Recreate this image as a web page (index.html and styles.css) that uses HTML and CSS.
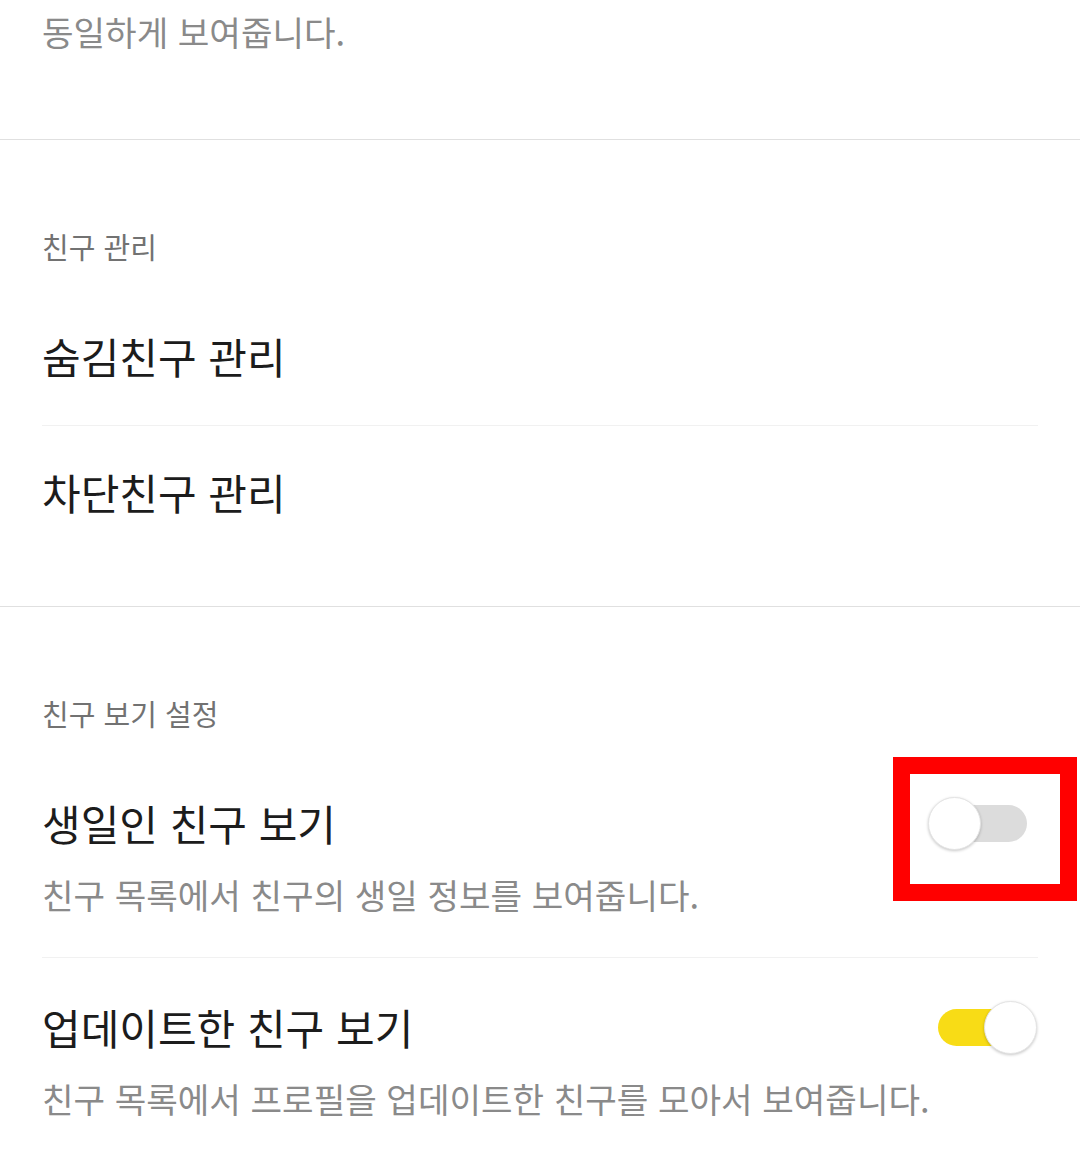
FILE: index.html
```html
<!DOCTYPE html>
<html lang="ko">
<head>
<meta charset="utf-8">
<link rel="stylesheet" href="styles.css">
</head>
<body>
<div class="page">
  <section class="section section-top">
    <p class="desc">동일하게 보여줍니다.</p>
  </section>

  <section class="section">
    <h2 class="header">친구 관리</h2>
    <div class="item item-link divided">
      <span class="title">숨김친구 관리</span>
    </div>
    <div class="item item-link">
      <span class="title">차단친구 관리</span>
    </div>
  </section>

  <section class="section section-last">
    <h2 class="header">친구 보기 설정</h2>
    <div class="item item-toggle divided">
      <div class="row">
        <span class="title">생일인 친구 보기</span>
        <span class="toggle"><span class="track"></span><span class="knob"></span></span>
      </div>
      <p class="desc item-desc">친구 목록에서 친구의 생일 정보를 보여줍니다.</p>
    </div>
    <div class="item item-toggle">
      <div class="row">
        <span class="title">업데이트한 친구 보기</span>
        <span class="toggle on"><span class="track"></span><span class="knob"></span></span>
      </div>
      <p class="desc item-desc">친구 목록에서 프로필을 업데이트한 친구를 모아서 보여줍니다.</p>
    </div>
  </section>

  <div class="highlight"></div>
</div>
</body>
</html>
```

FILE: styles.css
```css
* {
  box-sizing: border-box;
}

html, body {
  margin: 0;
  padding: 0;
  background: #ffffff;
}

body {
  font-family: "Noto Sans CJK KR", "Noto Sans", sans-serif;
  width: 1080px;
  height: 1161px;
  overflow: hidden;
}

.page {
  position: relative;
  width: 1080px;
}

.section {
  border-bottom: 1px solid #e0e0e0;
  padding: 86px 0 42px;
}

.section-top {
  padding: 7px 42px 84px;
}

.section-last {
  border-bottom: none;
  padding-bottom: 0;
}

.header {
  margin: 0 42px 21px;
  font-size: 29px;
  line-height: 40px;
  font-weight: 400;
  color: #727272;
}

.desc {
  margin: 0;
  font-size: 34.3px;
  line-height: 48px;
  color: #8a8a8a;
}

.item {
  margin: 0 42px;
}

.item.divided {
  border-bottom: 1px solid #f1f1f1;
}

.item-link {
  height: 139px;
  display: flex;
  align-items: center;
}

.item-link:last-child {
  height: 132px;
  margin-bottom: 6px;
}

.title {
  font-size: 42px;
  line-height: 56px;
  color: #1c1c1c;
}

.item-toggle {
  padding: 41px 0 39px;
}

.item-toggle:last-child {
  padding-bottom: 40px;
}

.row {
  display: flex;
  align-items: center;
  justify-content: space-between;
  height: 56px;
}

.item-desc {
  margin-top: 19px;
}

.toggle {
  position: relative;
  width: 109px;
  height: 53px;
  flex: none;
  margin-right: 1px;
}

.track {
  position: absolute;
  left: 10px;
  top: 8px;
  width: 89px;
  height: 37px;
  border-radius: 19px;
  background: #dcdcdc;
}

.knob {
  position: absolute;
  left: 0;
  top: 0;
  width: 53px;
  height: 53px;
  border-radius: 50%;
  background: #ffffff;
  border: 1px solid #e4e4e4;
  box-shadow: 0 1px 3px rgba(0, 0, 0, 0.22);
}

.toggle.on .track {
  background: #f8dc16;
}

.toggle.on .knob {
  left: 56px;
}

.highlight {
  position: absolute;
  left: 893px;
  top: 757px;
  width: 184px;
  height: 144px;
  border: 17px solid #ff0000;
}
```
